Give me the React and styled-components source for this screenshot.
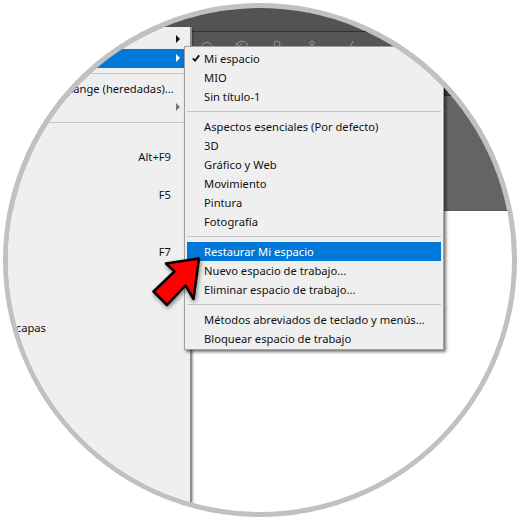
import React from 'react'
import styled, { createGlobalStyle } from 'styled-components'

const GlobalStyle = createGlobalStyle`
  html, body {
    margin: 0;
    background: #fff;
    overflow: hidden;
  }
`

const windowItems = [
  { label: 'Organizar', arrow: 'dark' },
  { label: 'Espacio de trabajo', arrow: 'light', active: true },
  { separator: true },
  { label: 'Buscar las extensiones en Exchange (heredadas)...', inset: 11 },
  { label: 'Extensiones', arrow: 'gray' },
  { separator: true },
  { label: '3D' },
  { label: 'Acciones', shortcut: 'Alt+F9' },
  { label: 'Ajustes' },
  { label: 'Ajustes de pincel', shortcut: 'F5' },
  { label: 'Bibliotecas' },
  { label: 'Canales' },
  { label: 'Capas', shortcut: 'F7' },
  { label: 'Carácter' },
  { label: 'Color' },
  { label: 'Comentarios' },
  { label: 'Composiciones de capas' },
]

const workspaceItems = [
  { label: 'Mi espacio', checked: true },
  { label: 'MIO' },
  { label: 'Sin título-1' },
  { separator: true },
  { label: 'Aspectos esenciales (Por defecto)' },
  { label: '3D' },
  { label: 'Gráfico y Web' },
  { label: 'Movimiento' },
  { label: 'Pintura' },
  { label: 'Fotografía' },
  { separator: true },
  { label: 'Restaurar Mi espacio', active: true },
  { label: 'Nuevo espacio de trabajo...' },
  { label: 'Eliminar espacio de trabajo...' },
  { separator: true },
  { label: 'Métodos abreviados de teclado y menús...' },
  { label: 'Bloquear espacio de trabajo' },
]

const App = () => {
  return (
    <Page>
      <GlobalStyle />
      <Lens>
        <Workspace>
          <TitleBar />
          <Toolbar>
            <ToolIcon viewBox="0 0 14 14"><circle cx="7" cy="9" r="5.5" /></ToolIcon>
            <ToolIcon viewBox="0 0 14 14"><path d="M1 7a6 6 0 0 1 11-2v8M1 4l3 3 3-2" /></ToolIcon>
            <ToolIcon viewBox="0 0 14 14"><circle cx="7" cy="5" r="3" /><path d="M7 8v6M3 11h8" /></ToolIcon>
            <ToolIcon viewBox="0 0 14 14"><circle cx="7" cy="4" r="2" /><path d="M2 9h10M7 6v8" /></ToolIcon>
            <ToolIcon viewBox="0 0 14 14"><path d="M1 9h7M8 14l5-12" /></ToolIcon>
          </Toolbar>
          <TabStrip />
          <DarkArea />
        </Workspace>

        <WindowMenu>
          {windowItems.map((item, i) =>
            item.separator ? (
              <WindowSeparator key={i} />
            ) : (
              <WindowRow key={i} $active={item.active} $inset={item.inset}>
                <span>{item.label}</span>
                <Shortcut>{item.shortcut}</Shortcut>
                {item.arrow && <Arrow $tone={item.arrow} />}
              </WindowRow>
            )
          )}
        </WindowMenu>

        <SubMenu>
          {workspaceItems.map((item, i) =>
            item.separator ? (
              <SubSeparator key={i} />
            ) : (
              <SubRow key={i} $active={item.active}>
                {item.checked && (
                  <Check viewBox="0 0 8 8">
                    <path d="M.8 4.4 3 6.6 7.2 1.4" />
                  </Check>
                )}
                {item.label}
              </SubRow>
            )
          )}
        </SubMenu>

        <Pointer viewBox="0 0 60 60">
          <path d="M51 8.5 18 13.5 26.5 21.5 5.5 41.5 19 55 37.5 35.5 45.5 49Z" />
        </Pointer>
      </Lens>
    </Page>
  )
}

const Page = styled.div`
  width: 520px;
  height: 520px;
  padding: 3px;
  box-sizing: border-box;
  background: #fff;
  font-family: "Noto Sans", sans-serif;
  font-size: 11.2px;
  color: #111;
`

const Lens = styled.div`
  position: relative;
  width: 514px;
  height: 514px;
  box-sizing: border-box;
  border: 5px solid #c1c1c1;
  border-radius: 50%;
  overflow: hidden;
  background: #fff;
`

const Workspace = styled.div`
  display: flex;
  flex-direction: column;
  height: 203px;
`

const TitleBar = styled.div`
  height: 23px;
  flex-shrink: 0;
  background: #535353;
  border-bottom: 1px solid #333;
`

const Toolbar = styled.div`
  height: 54px;
  flex-shrink: 0;
  display: flex;
  gap: 21px;
  padding: 7px 0 0 192px;
  box-sizing: border-box;
  background: #565656;
`

const ToolIcon = styled.svg`
  width: 14px;
  height: 14px;
  fill: none;
  stroke: #979797;
  stroke-width: 1;
`

const TabStrip = styled.div`
  height: 9px;
  flex-shrink: 0;
  background: #3f3f3f;
  border-bottom: 1px solid #2e2e2e;
`

const DarkArea = styled.div`
  flex: 1;
  background: #646464;
  border-bottom: 1px solid #555;
`

const WindowMenu = styled.div`
  position: absolute;
  top: 19px;
  bottom: 0;
  left: -108px;
  width: 292px;
  box-sizing: border-box;
  padding-top: 3px;
  background: #efefef;
  border-right: 2px solid #8d8d8d;
  box-shadow: 1px 1px 2px rgba(0, 0, 0, 0.35);
`

const WindowRow = styled.div`
  position: relative;
  display: flex;
  align-items: center;
  justify-content: space-between;
  height: 19px;
  padding: 0 19px 0 ${(p) => p.$inset ?? 17}px;
  white-space: nowrap;
  background: ${(p) => (p.$active ? '#0078d7' : 'transparent')};
  color: ${(p) => (p.$active ? '#fff' : 'inherit')};
`

const Shortcut = styled.span`
  flex-shrink: 0;
`

const arrowTones = { dark: '#111', light: '#fff', gray: '#777' }

const Arrow = styled.i`
  position: absolute;
  right: 10px;
  top: 5px;
  width: 0;
  height: 0;
  border-style: solid;
  border-width: 4px 0 4px 4px;
  border-color: transparent transparent transparent ${(p) => arrowTones[p.$tone]};
`

const WindowSeparator = styled.div`
  height: 1px;
  margin: 5px 0;
  background: #c6c6c6;
`

const SubMenu = styled.div`
  position: absolute;
  top: 38px;
  left: 176px;
  width: 260px;
  box-sizing: border-box;
  padding: 2px 2px 1px;
  background: #efefef;
  border: 1px solid #a0a0a0;
  box-shadow: 2px 2px 3px rgba(0, 0, 0, 0.55);
`

const SubRow = styled.div`
  position: relative;
  height: 19px;
  line-height: 19px;
  padding-left: 17px;
  white-space: nowrap;
  background: ${(p) => (p.$active ? '#0078d7' : 'transparent')};
  color: ${(p) => (p.$active ? '#fff' : 'inherit')};
`

const Check = styled.svg`
  position: absolute;
  left: 5px;
  top: 5px;
  width: 8px;
  height: 8px;
  fill: none;
  stroke: #111;
  stroke-width: 1.8;
`

const SubSeparator = styled.div`
  height: 1px;
  margin: 5px 0;
  background: #c6c6c6;
`

const Pointer = styled.svg`
  position: absolute;
  left: 140px;
  top: 242px;
  width: 60px;
  height: 60px;
  overflow: visible;
  filter: drop-shadow(1px 2px 2px rgba(0, 0, 0, 0.45));

  path {
    fill: #f00;
    stroke: #000;
    stroke-width: 2.5;
    stroke-linejoin: round;
  }
`

export default App
